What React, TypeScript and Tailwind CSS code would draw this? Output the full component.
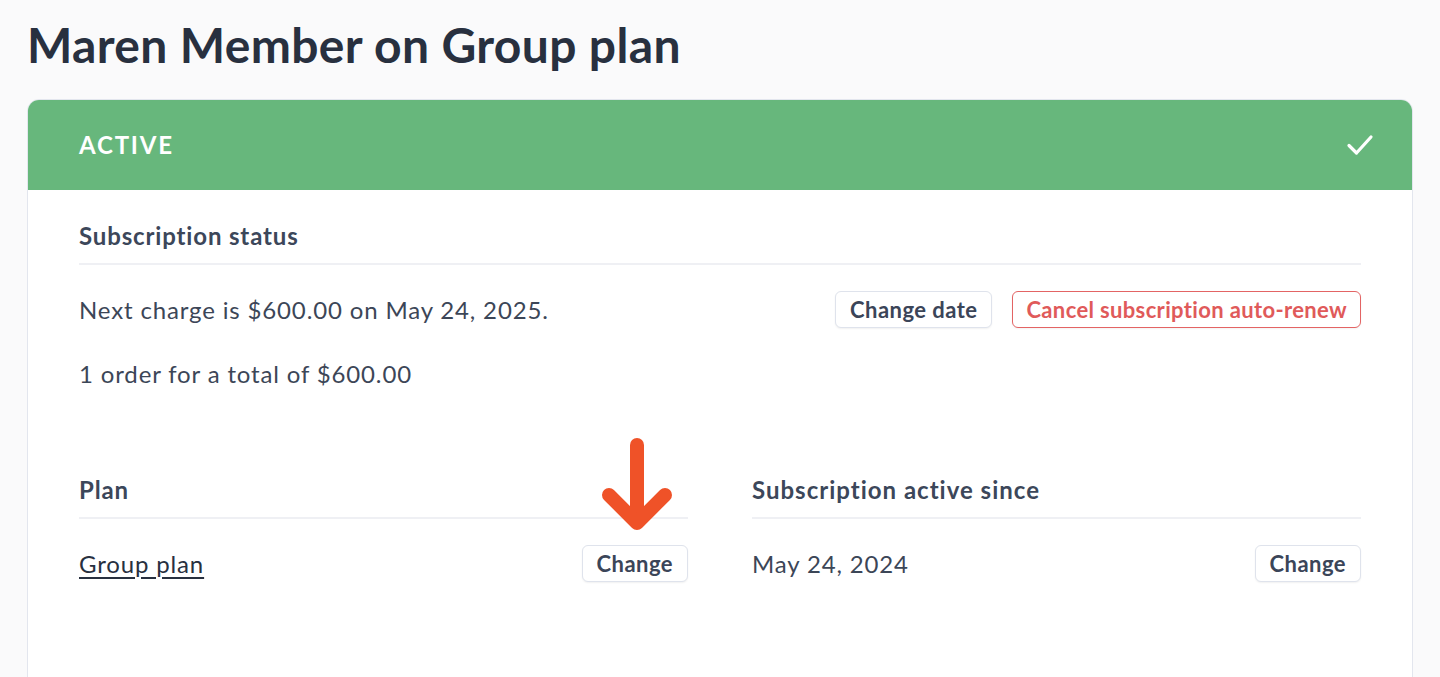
import React from "react";

const font = { fontFamily: "Lato, 'Open Sans', sans-serif" };

function Btn({ children, danger }: { children: React.ReactNode; danger?: boolean }) {
  return (
    <button
      className={
        danger
          ? "h-[37px] px-[13px] rounded-[6px] border border-[#e36464] bg-white text-[#e05a5a] text-[22px] font-bold leading-none tracking-[0.35px] shadow-[0_1px_2px_rgba(0,0,0,0.05)]"
          : "h-[37px] px-[14px] rounded-[6px] border border-[#dfe3ec] bg-white text-[#3b4558] text-[22px] font-bold leading-none tracking-[0.45px] shadow-[0_1px_2px_rgba(0,0,0,0.06)]"
      }
    >
      {children}
    </button>
  );
}

export default function App() {
  return (
    <div style={font} className="bg-[#fafafb] px-[27px] pt-[18px] overflow-hidden h-[677px]">
      <h1 className="text-[48px] font-bold text-[#28303f] leading-[54px] tracking-[0.35px]">Maren Member on Group plan</h1>
      <div className="mt-[27px] rounded-[12px] border border-[#e3e6ee] bg-white overflow-hidden h-[640px]">
        <div className="h-[90px] bg-[#67b77c] flex items-center justify-between pl-[51px] pr-[38px]">
          <span className="text-white text-[24px] font-bold tracking-[1.8px] leading-[30px]">ACTIVE</span>
          <svg width="28" height="24" viewBox="0 0 28 24" fill="none">
            <path d="M3 12.5 L10.5 20 L25 4" stroke="white" strokeWidth="3.2" strokeLinecap="round" strokeLinejoin="round" />
          </svg>
        </div>
        <div className="px-[51px] pt-[31px]">
          <div className="text-[24px] font-bold text-[#3c475a] pb-[12px] border-b-2 border-[#eff0f4] leading-[30px] tracking-[0.85px]">Subscription status</div>
          <div className="flex items-center justify-between mt-[26px]">
            <span className="text-[24px] leading-[30px] text-[#3c4657] tracking-[0.85px]">Next charge is $600.00 on May 24, 2025.</span>
            <div className="flex gap-[20px]">
              <Btn>Change date</Btn>
              <Btn danger>Cancel subscription auto-renew</Btn>
            </div>
          </div>
          <div className="text-[24px] leading-[30px] text-[#3c4657] tracking-[0.85px] mt-[31px]">1 order for a total of $600.00</div>
          <div className="grid grid-cols-2 gap-[64px] mt-[86px]">
            <div className="relative">
              <div className="text-[24px] font-bold text-[#3c475a] pb-[12px] border-b-2 border-[#eff0f4] leading-[30px] tracking-[0.85px]">Plan</div>
              <div className="flex items-center justify-between mt-[26px]">
                <a className="text-[24px] leading-[30px] text-[#28303f] tracking-[0.85px] underline underline-offset-[4px] decoration-[1.5px]">Group plan</a>
                <Btn>Change</Btn>
              </div>
              <svg className="absolute left-[518px] top-[-45px]" width="80" height="110" viewBox="0 0 80 110" fill="none">
                <path d="M40 15 L40 90" stroke="#ef5228" strokeWidth="14" strokeLinecap="round" />
                <path d="M12 65 L40 93 L68 65" stroke="#ef5228" strokeWidth="14" strokeLinecap="round" strokeLinejoin="round" />
              </svg>
            </div>
            <div>
              <div className="text-[24px] font-bold text-[#3c475a] pb-[12px] border-b-2 border-[#eff0f4] leading-[30px] tracking-[1px]">Subscription active since</div>
              <div className="flex items-center justify-between mt-[26px]">
                <span className="text-[24px] leading-[30px] text-[#3c4657] tracking-[0.85px]">May 24, 2024</span>
                <Btn>Change</Btn>
              </div>
            </div>
          </div>
        </div>
      </div>
    </div>
  );
}
